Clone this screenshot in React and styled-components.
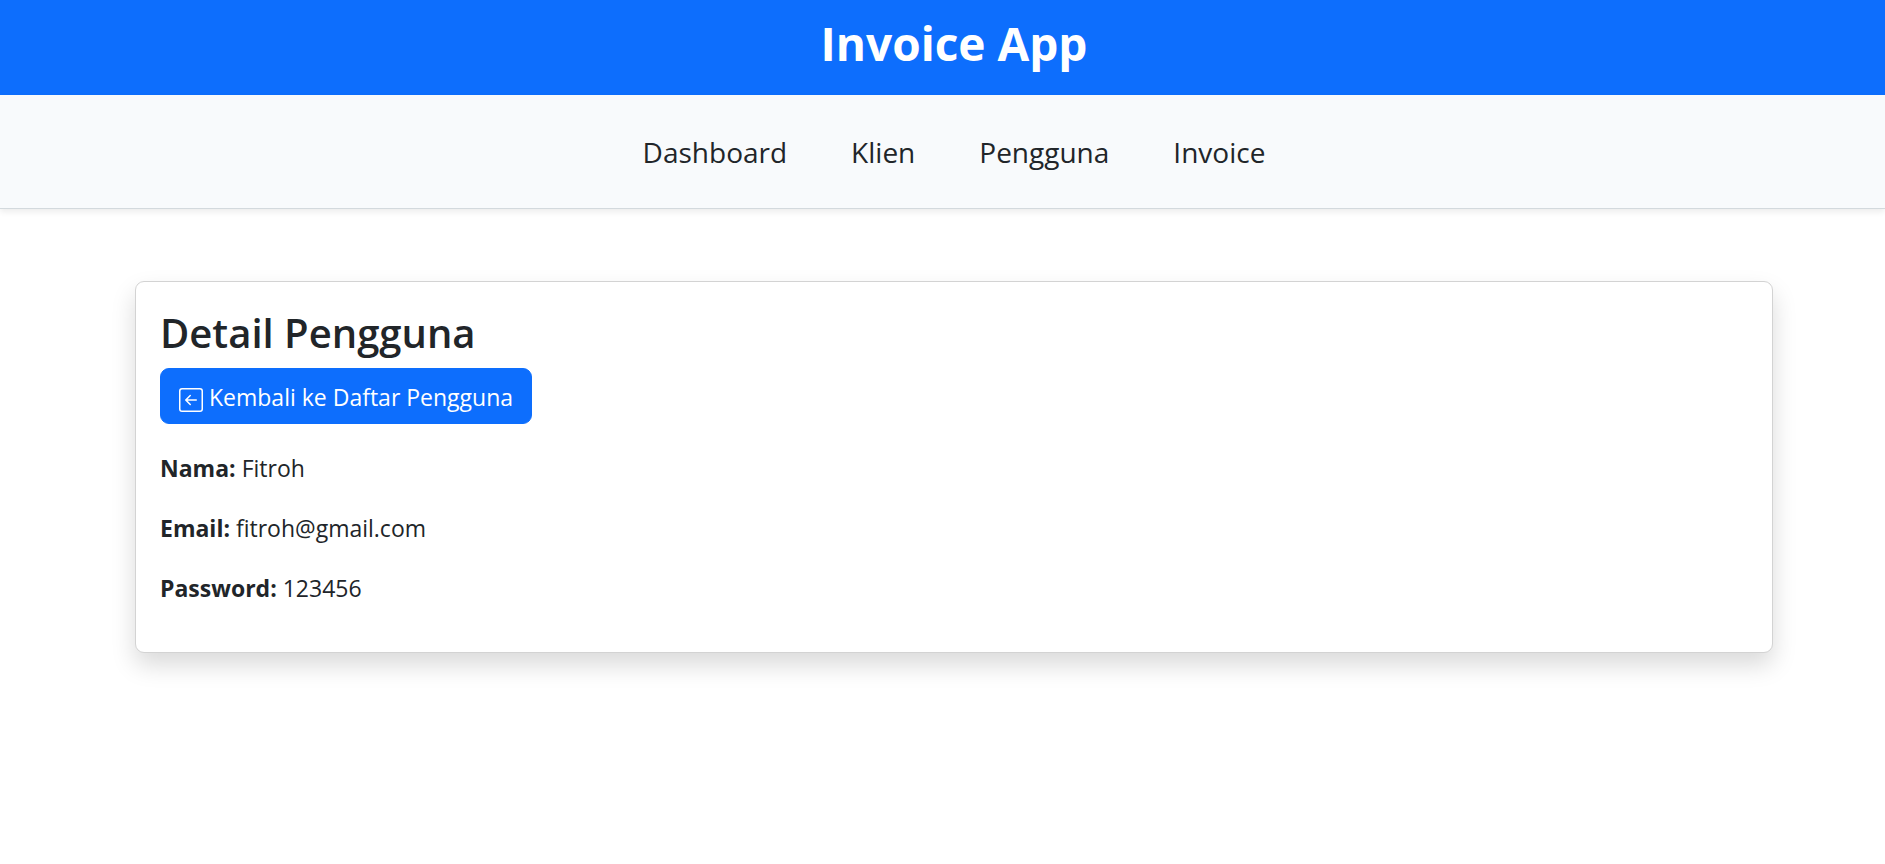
import React from "react";
import styled, { createGlobalStyle } from "styled-components";
import { BsArrowLeftSquare } from "react-icons/bs";

const GlobalStyle = createGlobalStyle`
  *, *::before, *::after { box-sizing: border-box; }
  body {
    margin: 0;
    background: #fff;
    color: #212529;
    font-family: "Segoe UI", "Open Sans", "Noto Sans", sans-serif;
    font-size: 23px;
    line-height: 36px;
  }
`;

const Header = styled.header`
  padding: 14px 0 23px 23px;
  background: #0d6efd;
  color: #fff;
  text-align: center;
`;

const Brand = styled.h1`
  margin: 0;
  font-size: 46px;
  line-height: 58px;
  font-weight: 700;
`;

const Nav = styled.nav`
  padding: 35px 0 33px 23px;
  background: #f8fafc;
  border-bottom: 1px solid #d3d9dd;
  box-shadow: 0 3px 6px rgba(0, 0, 0, 0.075);
`;

const NavList = styled.ul`
  display: flex;
  justify-content: center;
  gap: 64px;
  margin: 0;
  padding: 0;
  list-style: none;
`;

const NavLink = styled.a`
  display: block;
  color: #212529;
  font-size: 28px;
  line-height: 45px;
  text-decoration: none;
`;

const Main = styled.main`
  padding: 72px 0 72px 23px;
`;

const Container = styled.div`
  max-width: 1710px;
  margin: 0 auto;
  padding: 0 36px;
`;

const Card = styled.section`
  padding: 26px 24px 22px;
  background: #fff;
  border: 1px solid #d3d3d3;
  border-radius: 9px;
  box-shadow: 0 12px 24px rgba(0, 0, 0, 0.15);
`;

const Title = styled.h2`
  margin: 0 0 10px;
  font-size: 40px;
  line-height: 50px;
  font-weight: 600;
`;

const BackButton = styled.button`
  display: flex;
  align-items: center;
  gap: 6px;
  margin: 0 0 26px;
  padding: 10px 18px 8px;
  border: 1px solid #0d6efd;
  border-radius: 9px;
  background: #0d6efd;
  color: #fff;
  font: inherit;
  cursor: pointer;

  svg {
    width: 24px;
    height: 24px;
    margin-top: 5px;
  }
`;

const Field = styled.p`
  margin: 0 0 24px;
`;

const Label = styled.strong`
  font-weight: 700;
`;

const links = ["Dashboard", "Klien", "Pengguna", "Invoice"];

const fields = [
  ["Nama", "Fitroh"],
  ["Email", "fitroh@gmail.com"],
  ["Password", "123456"],
];

export default function App() {
  return (
    <>
      <GlobalStyle />
      <Header>
        <Brand>Invoice App</Brand>
      </Header>
      <Nav>
        <NavList>
          {links.map((name) => (
            <li key={name}>
              <NavLink href={`#${name.toLowerCase()}`}>{name}</NavLink>
            </li>
          ))}
        </NavList>
      </Nav>
      <Main>
        <Container>
          <Card>
            <Title>Detail Pengguna</Title>
            <BackButton type="button">
              <BsArrowLeftSquare aria-hidden="true" />
              Kembali ke Daftar Pengguna
            </BackButton>
            {fields.map(([label, value]) => (
              <Field key={label}>
                <Label>{label}:</Label> {value}
              </Field>
            ))}
          </Card>
        </Container>
      </Main>
    </>
  );
}
